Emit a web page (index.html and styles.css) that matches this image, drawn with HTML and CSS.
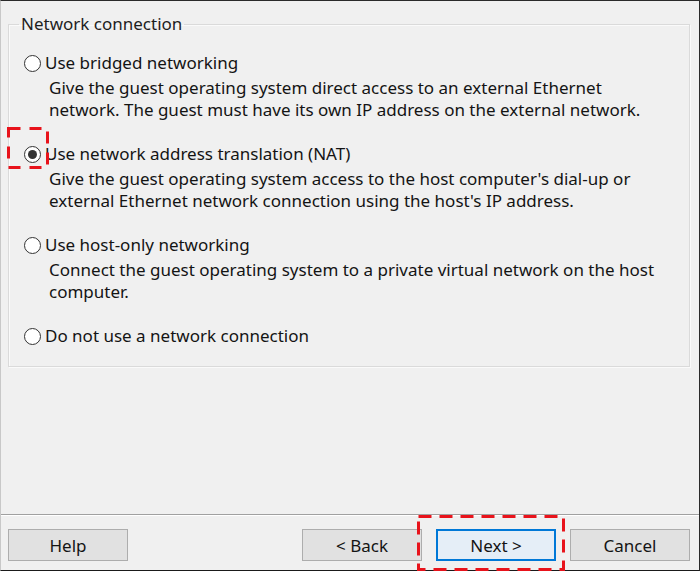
FILE: index.html
```html
<!DOCTYPE html>
<html>
<head>
<meta charset="utf-8">
<link rel="stylesheet" href="styles.css">
</head>
<body>
<div class="window">
  <fieldset class="group">
    <legend class="legend">Network connection</legend>
    <div class="options">
      <div class="option">
        <div class="radio-row"><span class="radio"></span><span class="label">Use bridged networking</span></div>
        <div class="desc">Give the guest operating system direct access to an external Ethernet<br>network. The guest must have its own IP address on the external network.</div>
      </div>
      <div class="option">
        <div class="radio-row"><span class="radio checked"></span><span class="label">Use network address translation (NAT)</span></div>
        <div class="desc">Give the guest operating system access to the host computer's dial-up or<br>external Ethernet network connection using the host's IP address.</div>
      </div>
      <div class="option">
        <div class="radio-row"><span class="radio"></span><span class="label">Use host-only networking</span></div>
        <div class="desc">Connect the guest operating system to a private virtual network on the host<br>computer.</div>
      </div>
      <div class="option">
        <div class="radio-row"><span class="radio"></span><span class="label">Do not use a network connection</span></div>
      </div>
    </div>
  </fieldset>
  <div class="spacer"></div>
  <div class="footer">
    <button class="btn">Help</button>
    <div class="right-buttons">
      <button class="btn">&lt; Back</button>
      <button class="btn default">Next &gt;</button>
      <button class="btn">Cancel</button>
    </div>
  </div>
  <svg class="mark mark-nat" width="42" height="42" viewBox="0 0 42 42"><rect x="1.5" y="1.5" width="39" height="39" fill="none" stroke="#e8131b" stroke-width="3" stroke-dasharray="12 9"/></svg>
  <svg class="mark mark-next" width="148" height="56" viewBox="0 0 148 56"><rect x="1.5" y="1.5" width="145" height="53" fill="none" stroke="#e8131b" stroke-width="3" stroke-dasharray="13 8"/></svg>
</div>
</body>
</html>
```
FILE: styles.css
```css
* { box-sizing: border-box; }
html, body { margin: 0; padding: 0; background: #f0f0f0; }
.window {
  position: relative;
  width: 700px;
  height: 571px;
  background: #f0f0f0;
  border-top: 1px solid #2a2a2a;
  border-right: 1px solid #2a2a2a;
  border-bottom: 1px solid #1a1a1a;
  border-left: 1px solid #c8c8c8;
  display: flex;
  flex-direction: column;
  font-family: "Noto Sans", "Open Sans", sans-serif;
  font-size: 17px;
  color: #141414;
}
.group {
  margin: 13px 9px 0 7px;
  padding: 0 10px 19px 10px;
  border: 1px solid #dadada;
  box-shadow: inset 1px 1px 0 #fafafa, 1px 1px 0 #fafafa;
  min-width: 0;
}
.legend {
  padding: 0 2px;
  line-height: 20px;
  color: #1e1e1e;
}
.options {
  display: flex;
  flex-direction: column;
  gap: 22px;
  padding-top: 18px;
}
.option { display: flex; flex-direction: column; gap: 3px; }
.radio-row {
  display: flex;
  align-items: center;
  height: 22px;
}
.radio {
  width: 17px;
  height: 17px;
  margin-left: 5px;
  border: 1px solid #333;
  border-radius: 50%;
  background: #fff;
  display: flex;
  align-items: center;
  justify-content: center;
  flex: none;
}
.radio.checked::after {
  content: "";
  width: 9px;
  height: 9px;
  border-radius: 50%;
  background: #333;
}
.label { margin-left: 4px; line-height: 22px; white-space: nowrap; }
.desc { padding-left: 30px; line-height: 22px; white-space: nowrap; }
.spacer { flex: 1; }
.footer {
  border-top: 1px solid #a0a0a0;
  box-shadow: inset 0 1px 0 #fff;
  padding: 14px 9px 9px 7px;
  display: flex;
  justify-content: space-between;
}
.right-buttons { display: flex; gap: 14px; }
.btn {
  width: 120px;
  height: 32px;
  background: #e1e1e1;
  border: 1px solid #adadad;
  font-family: "Noto Sans", "Open Sans", sans-serif;
  font-size: 17px;
  color: #141414;
  padding: 0;
}
.btn.default {
  border: 2px solid #0078d7;
  background: #e5eef7;
}
.mark { position: absolute; }
.mark-nat { left: 6px; top: 126px; }
.mark-next { left: 416px; top: 514px; }
```
